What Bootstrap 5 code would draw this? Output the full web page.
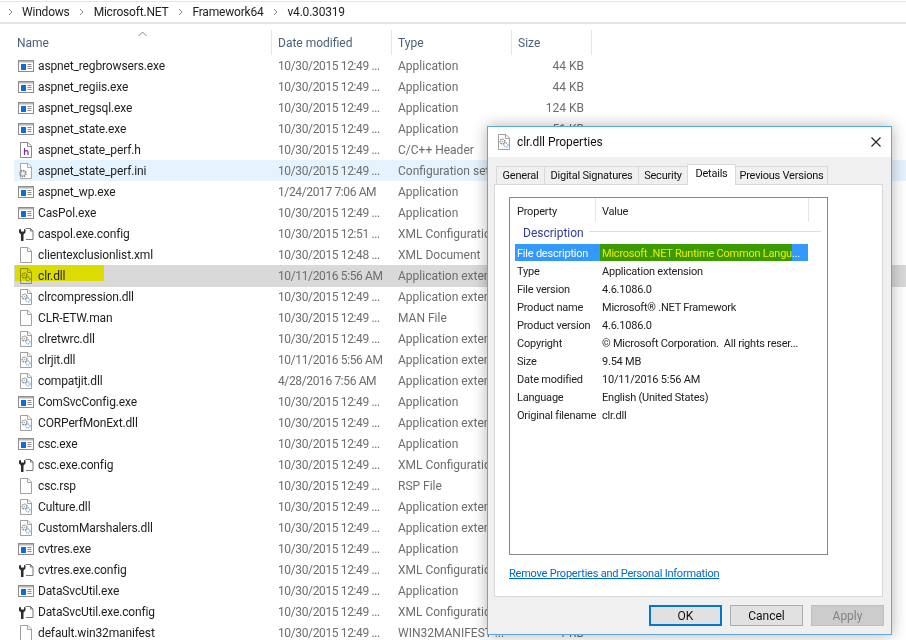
<!doctype html>
<html lang="en"><head><meta charset="utf-8"><title>clr.dll Properties</title>
<link rel="stylesheet" href="https://cdn.jsdelivr.net/npm/bootstrap@5.3.0/dist/css/bootstrap.min.css">
<style>
html,body{margin:0;height:640px;overflow:hidden;background:#fff}
body{font:12px/16px Roboto,"Open Sans",sans-serif;color:#1e1e1e;position:relative}
.crumbs{height:23px;border-top:1px solid #e5e5e5;border-bottom:2px solid #e3e3e3;padding-left:6.5px;gap:8.5px;color:#222;margin-top:1px;box-sizing:border-box;letter-spacing:-.2px}
.crumbs svg{width:7px;height:8px;flex:none}
.heads{height:25px;margin-top:6px;color:#4c607a;padding-left:14px;position:relative}
.hcol{border-right:1px solid #e5e5e5;height:25px;padding-left:6px;line-height:27px;flex:none}
.hname{width:258px;padding-left:3px}.hother{width:120px}.hlast{width:80px}
.hsort{position:absolute;left:138px;top:1px;width:9px;height:6px}
.rows{padding-left:14px}
.frow{height:21px;line-height:14px;width:892px;flex:none;white-space:nowrap;align-items:center;padding-top:1px}
.frow.hov{background:#e5f3ff}
.frow.sel{background:#d9d9d9;height:22px;margin-bottom:-1px;padding-top:0}
.fname{width:258px;padding-left:4px;flex:none;gap:4px;letter-spacing:-.14px}
.fname svg{width:16px;height:16px;flex:none}
.fdate{width:120px;padding-left:6px;color:#6d6d6d;flex:none;letter-spacing:-.37px}
.ftype{width:120px;padding-left:6px;color:#6d6d6d;flex:none}
.fsize{width:72px;text-align:right;color:#6d6d6d;flex:none}
.hl{background:linear-gradient(#dcdc00,#dcdc00) no-repeat 0 0/100% 16px;height:22px;margin-left:-3px;padding-left:3px;gap:4px;width:89px;flex:none}
.hl svg{mix-blend-mode:multiply}
.propwin{position:absolute;left:487px;top:126px;width:405px;height:509px;background:#f0f0f0;border:1px solid #5aa9e6;box-shadow:0 0 14px rgba(0,0,0,.3);display:flex;flex-direction:column;font-size:11px;letter-spacing:-.22px}
.wtitle{height:30px;background:#fff;flex:none;padding-left:10px;gap:7px;color:#111;font-size:12px;letter-spacing:-.05px}
.wtitle svg.pg{width:12px;height:16px}
.wclose{margin-left:auto;margin-right:10px;width:10px;height:10px}
.tabline{height:20px;margin-top:7px;padding-left:8px;flex:none;align-items:flex-end}
.wtab{height:18px;background:#f0f0f0;border:1px solid #d9d9d9;border-bottom:0;margin-right:-1px;line-height:18px;color:#111;text-align:center;flex:none}
.wtab:nth-child(1){width:49px}.wtab:nth-child(2){width:95px}.wtab:nth-child(3){width:50px}.wtab:nth-child(4){width:49px}.wtab:nth-child(5){width:93px}
.wtab.on{height:21px;background:#fff;position:relative;z-index:2;margin-bottom:-1px;line-height:18px}
.tabbody{position:relative;margin-left:6px;width:389px;height:413px;background:#fff;border:1px solid #d9d9d9;padding:12px 0 0 14px;flex:none}
.plist{width:319px;height:358px;border:1px solid #828790;padding:0 5px;color:#222}
.phead{height:24px;line-height:28px}
.phead div{border-right:1px solid #e5e5e5;flex:none;height:24px}
.ph1{width:81px;padding-left:2px}.ph2{width:213px;padding-left:6px}
.pgroup{color:#33399b;font-size:12px;letter-spacing:0;gap:5px;height:22px;padding-left:8px}
.pgroup i{display:block;flex:1;height:1px;background:#d5dfe5;margin-right:1px;margin-top:-3px}
.prow{height:18px;line-height:20px;width:293px;padding-left:2px;white-space:nowrap}
.prow span:first-child{width:85px;flex:none}
.prow span+span{flex:none}
.prow.act{background:#3399ff;color:#fff;height:17px;line-height:18px;margin-bottom:1px}
.prow.act b{font-weight:400;color:#e8f000;background:#3a9a00;width:192px;padding-left:2px;margin-left:-2px;display:block;flex:none;height:17px;line-height:19px}
.prow.act span,.prow.act em{line-height:19px}
.prow.act em{font-style:normal;color:#fff}
.plink{color:#0066cc;text-decoration:underline;display:block;margin-top:11px;width:max-content}
.wbtns{gap:8px;justify-content:flex-end;padding:8px 7px 0 0}
.wbtn{width:73px;height:21px;background:#e1e1e1;border:1px solid #adadad;border-radius:0;font-size:12px;line-height:16px;padding:0;color:#111;letter-spacing:0}
.wbtn.def{border:2px solid #0078d7}
.wbtn.off{background:#ccc;color:#838383;border-color:#bfbfbf}
</style></head><body>
<svg width="0" height="0" class="position-absolute">
<defs>
<symbol id="i-exe" viewBox="0 0 16 16"><rect x=".5" y="2.500" width="15" height="11" fill="#fff" stroke="#8c8c8c"/><rect x="1" y="3" width="14" height="1.500" fill="#b5b5b5"/><rect x="3" y="6" width="5" height="6" fill="#0a6fd6"/><path d="M9.500 6.500h4M9.500 8.500h4M9.500 10.500h4" stroke="#8c8c8c"/></symbol>
<symbol id="i-page" viewBox="0 0 16 16"><path d="M2.500 .5h7.500l3.500 3.500v11.500h-11z" fill="#fff" stroke="#a0a0a0"/><path d="M9.500 .5v4h4" fill="none" stroke="#a0a0a0"/></symbol>
<symbol id="i-h" viewBox="0 0 16 16"><path d="M2.500 .5h7.500l3.500 3.500v11.500h-11z" fill="#fff" stroke="#8a8a8a"/><path d="M9.500 .5v4h4" fill="none" stroke="#8a8a8a"/><path d="M6.500 6v7M6.500 9.500c2-1.500 3.500-1 3.500 .5v3" fill="none" stroke="#7b2f9a" stroke-width="1.200"/></symbol>
<symbol id="i-dll" viewBox="0 0 16 16"><path d="M2.500 .5h7.500l3.500 3.500v11.500h-11z" fill="#fff" stroke="#a0a0a0"/><path d="M9.500 .5v4h4" fill="none" stroke="#a0a0a0"/><circle cx="6.500" cy="7.500" r="2.400" fill="none" stroke="#8a8a8a" stroke-width="1.400" stroke-dasharray="1.300 .7"/><circle cx="6.500" cy="7.500" r=".8" fill="#b0b0b0"/><circle cx="10" cy="11" r="2" fill="none" stroke="#8fb4d8" stroke-width="1.300" stroke-dasharray="1.100 .6"/></symbol>
<symbol id="i-ini" viewBox="0 0 16 16"><path d="M2.500 .5h7.500l3.500 3.500v11.500h-11z" fill="#fff" stroke="#a8a8a8"/><path d="M9.500 .5v4h4" fill="none" stroke="#a8a8a8"/><circle cx="5" cy="10.500" r="3" fill="#ddd" stroke="#808080" stroke-dasharray="1.500 .8" stroke-width="1.500"/><circle cx="5" cy="10.500" r="1" fill="#fff"/></symbol>
<symbol id="i-cfg" viewBox="0 0 16 16"><path d="M7.500 2.500h5l2.500 2.500v8.500h-7" fill="#fff" stroke="#777"/><path d="M12.500 2.500v2.500h2.500" fill="none" stroke="#777"/><path d="M1 3.500v3l2 2v6.500h2.500v-6.500l2-2v-3l-1.500-.5v2.500h-3v-2.500z" fill="#2e2e2e"/></symbol>
</defs></svg>

<div class="crumbs d-flex align-items-center">
<svg viewBox="0 0 7 8"><path d="M2 1l3 3-3 3" fill="none" stroke="#888"/></svg><span>Windows</span>
<svg viewBox="0 0 7 8"><path d="M2 1l3 3-3 3" fill="none" stroke="#888"/></svg><span>Microsoft.NET</span>
<svg viewBox="0 0 7 8"><path d="M2 1l3 3-3 3" fill="none" stroke="#888"/></svg><span>Framework64</span>
<svg viewBox="0 0 7 8"><path d="M2 1l3 3-3 3" fill="none" stroke="#888"/></svg><span>v4.0.30319</span>
</div>

<div class="heads d-flex">
<svg class="hsort" viewBox="0 0 9 6"><path d="M.5 5l4-4 4 4" fill="none" stroke="#888"/></svg>
<div class="hcol hname">Name</div><div class="hcol hother">Date modified</div><div class="hcol hother">Type</div><div class="hcol hlast">Size</div>
</div>

<div class="rows">
<div class="frow d-flex"><div class="fname d-flex align-items-center"><svg><use href="#i-exe"/></svg><span>aspnet_regbrowsers.exe</span></div><div class="fdate">10/30/2015 12:49 ...</div><div class="ftype">Application</div><div class="fsize">44 KB</div></div>
<div class="frow d-flex"><div class="fname d-flex align-items-center"><svg><use href="#i-exe"/></svg><span>aspnet_regiis.exe</span></div><div class="fdate">10/30/2015 12:49 ...</div><div class="ftype">Application</div><div class="fsize">44 KB</div></div>
<div class="frow d-flex"><div class="fname d-flex align-items-center"><svg><use href="#i-exe"/></svg><span>aspnet_regsql.exe</span></div><div class="fdate">10/30/2015 12:49 ...</div><div class="ftype">Application</div><div class="fsize">124 KB</div></div>
<div class="frow d-flex"><div class="fname d-flex align-items-center"><svg><use href="#i-exe"/></svg><span>aspnet_state.exe</span></div><div class="fdate">10/30/2015 12:49 ...</div><div class="ftype">Application</div><div class="fsize">51 KB</div></div>
<div class="frow d-flex"><div class="fname d-flex align-items-center"><svg><use href="#i-h"/></svg><span>aspnet_state_perf.h</span></div><div class="fdate">10/30/2015 12:49 ...</div><div class="ftype">C/C++ Header</div><div class="fsize"></div></div>
<div class="frow hov d-flex"><div class="fname d-flex align-items-center"><svg><use href="#i-ini"/></svg><span>aspnet_state_perf.ini</span></div><div class="fdate">10/30/2015 12:49 ...</div><div class="ftype">Configuration sett...</div><div class="fsize"></div></div>
<div class="frow d-flex"><div class="fname d-flex align-items-center"><svg><use href="#i-exe"/></svg><span>aspnet_wp.exe</span></div><div class="fdate">1/24/2017 7:06 AM</div><div class="ftype">Application</div><div class="fsize"></div></div>
<div class="frow d-flex"><div class="fname d-flex align-items-center"><svg><use href="#i-exe"/></svg><span>CasPol.exe</span></div><div class="fdate">10/30/2015 12:49 ...</div><div class="ftype">Application</div><div class="fsize"></div></div>
<div class="frow d-flex"><div class="fname d-flex align-items-center"><svg><use href="#i-cfg"/></svg><span>caspol.exe.config</span></div><div class="fdate">10/30/2015 12:51 ...</div><div class="ftype">XML Configuratio...</div><div class="fsize"></div></div>
<div class="frow d-flex"><div class="fname d-flex align-items-center"><svg><use href="#i-page"/></svg><span>clientexclusionlist.xml</span></div><div class="fdate">10/30/2015 12:48 ...</div><div class="ftype">XML Document</div><div class="fsize"></div></div>
<div class="frow sel d-flex"><div class="fname d-flex align-items-center"><div class="hl d-flex align-items-center"><svg><use href="#i-dll"/></svg><span>clr.dll</span></div></div><div class="fdate">10/11/2016 5:56 AM</div><div class="ftype">Application exten...</div><div class="fsize"></div></div>
<div class="frow d-flex"><div class="fname d-flex align-items-center"><svg><use href="#i-dll"/></svg><span>clrcompression.dll</span></div><div class="fdate">10/30/2015 12:49 ...</div><div class="ftype">Application exten...</div><div class="fsize"></div></div>
<div class="frow d-flex"><div class="fname d-flex align-items-center"><svg><use href="#i-page"/></svg><span>CLR-ETW.man</span></div><div class="fdate">10/30/2015 12:49 ...</div><div class="ftype">MAN File</div><div class="fsize"></div></div>
<div class="frow d-flex"><div class="fname d-flex align-items-center"><svg><use href="#i-dll"/></svg><span>clretwrc.dll</span></div><div class="fdate">10/30/2015 12:49 ...</div><div class="ftype">Application exten...</div><div class="fsize"></div></div>
<div class="frow d-flex"><div class="fname d-flex align-items-center"><svg><use href="#i-dll"/></svg><span>clrjit.dll</span></div><div class="fdate">10/11/2016 5:56 AM</div><div class="ftype">Application exten...</div><div class="fsize"></div></div>
<div class="frow d-flex"><div class="fname d-flex align-items-center"><svg><use href="#i-dll"/></svg><span>compatjit.dll</span></div><div class="fdate">4/28/2016 7:56 AM</div><div class="ftype">Application exten...</div><div class="fsize"></div></div>
<div class="frow d-flex"><div class="fname d-flex align-items-center"><svg><use href="#i-exe"/></svg><span>ComSvcConfig.exe</span></div><div class="fdate">10/30/2015 12:49 ...</div><div class="ftype">Application</div><div class="fsize"></div></div>
<div class="frow d-flex"><div class="fname d-flex align-items-center"><svg><use href="#i-dll"/></svg><span>CORPerfMonExt.dll</span></div><div class="fdate">10/30/2015 12:49 ...</div><div class="ftype">Application exten...</div><div class="fsize"></div></div>
<div class="frow d-flex"><div class="fname d-flex align-items-center"><svg><use href="#i-exe"/></svg><span>csc.exe</span></div><div class="fdate">10/30/2015 12:49 ...</div><div class="ftype">Application</div><div class="fsize"></div></div>
<div class="frow d-flex"><div class="fname d-flex align-items-center"><svg><use href="#i-cfg"/></svg><span>csc.exe.config</span></div><div class="fdate">10/30/2015 12:49 ...</div><div class="ftype">XML Configuratio...</div><div class="fsize"></div></div>
<div class="frow d-flex"><div class="fname d-flex align-items-center"><svg><use href="#i-page"/></svg><span>csc.rsp</span></div><div class="fdate">10/30/2015 12:49 ...</div><div class="ftype">RSP File</div><div class="fsize"></div></div>
<div class="frow d-flex"><div class="fname d-flex align-items-center"><svg><use href="#i-dll"/></svg><span>Culture.dll</span></div><div class="fdate">10/30/2015 12:49 ...</div><div class="ftype">Application exten...</div><div class="fsize"></div></div>
<div class="frow d-flex"><div class="fname d-flex align-items-center"><svg><use href="#i-dll"/></svg><span>CustomMarshalers.dll</span></div><div class="fdate">10/30/2015 12:49 ...</div><div class="ftype">Application exten...</div><div class="fsize"></div></div>
<div class="frow d-flex"><div class="fname d-flex align-items-center"><svg><use href="#i-exe"/></svg><span>cvtres.exe</span></div><div class="fdate">10/30/2015 12:49 ...</div><div class="ftype">Application</div><div class="fsize"></div></div>
<div class="frow d-flex"><div class="fname d-flex align-items-center"><svg><use href="#i-cfg"/></svg><span>cvtres.exe.config</span></div><div class="fdate">10/30/2015 12:49 ...</div><div class="ftype">XML Configuratio...</div><div class="fsize"></div></div>
<div class="frow d-flex"><div class="fname d-flex align-items-center"><svg><use href="#i-exe"/></svg><span>DataSvcUtil.exe</span></div><div class="fdate">10/30/2015 12:49 ...</div><div class="ftype">Application</div><div class="fsize"></div></div>
<div class="frow d-flex"><div class="fname d-flex align-items-center"><svg><use href="#i-cfg"/></svg><span>DataSvcUtil.exe.config</span></div><div class="fdate">10/30/2015 12:49 ...</div><div class="ftype">XML Configuratio...</div><div class="fsize"></div></div>
<div class="frow d-flex"><div class="fname d-flex align-items-center"><svg><use href="#i-page"/></svg><span>default.win32manifest</span></div><div class="fdate">10/30/2015 12:49 ...</div><div class="ftype">WIN32MANIFEST ...</div><div class="fsize">1 KB</div></div>
</div>

<div class="propwin">
<div class="wtitle d-flex align-items-center"><svg class="pg" viewBox="2 0 12 16"><use href="#i-dll" width="16" height="16"/></svg><span>clr.dll Properties</span>
<svg class="wclose" viewBox="0 0 10 10"><path d="M.5 .5l9 9M9.500 .5l-9 9" stroke="#222" stroke-width="1.100"/></svg></div>
<div class="tabline d-flex"><div class="wtab">General</div><div class="wtab">Digital Signatures</div><div class="wtab">Security</div><div class="wtab on">Details</div><div class="wtab">Previous Versions</div></div>
<div class="tabbody">
<div class="plist">
<div class="phead d-flex"><div class="ph1">Property</div><div class="ph2">Value</div></div>
<div class="pgroup d-flex align-items-center"><span>Description</span><i></i></div>
<div class="prow act d-flex"><span>File description</span><b>Microsoft .NET Runtime Common Langu</b><em>...</em></div>
<div class="prow d-flex"><span>Type</span><span>Application extension</span></div>
<div class="prow d-flex"><span>File version</span><span>4.6.1086.0</span></div>
<div class="prow d-flex"><span>Product name</span><span>Microsoft® .NET Framework</span></div>
<div class="prow d-flex"><span>Product version</span><span>4.6.1086.0</span></div>
<div class="prow d-flex"><span>Copyright</span><span>© Microsoft Corporation.&nbsp; All rights reser...</span></div>
<div class="prow d-flex"><span>Size</span><span>9.54 MB</span></div>
<div class="prow d-flex"><span>Date modified</span><span>10/11/2016 5:56 AM</span></div>
<div class="prow d-flex"><span>Language</span><span>English (United States)</span></div>
<div class="prow d-flex"><span>Original filename</span><span>clr.dll</span></div>
</div>
<a class="plink" href="#">Remove Properties and Personal Information</a>
</div>
<div class="wbtns d-flex"><button class="btn wbtn def">OK</button><button class="btn wbtn">Cancel</button><button class="btn wbtn off">Apply</button></div>
</div>
</body></html>
